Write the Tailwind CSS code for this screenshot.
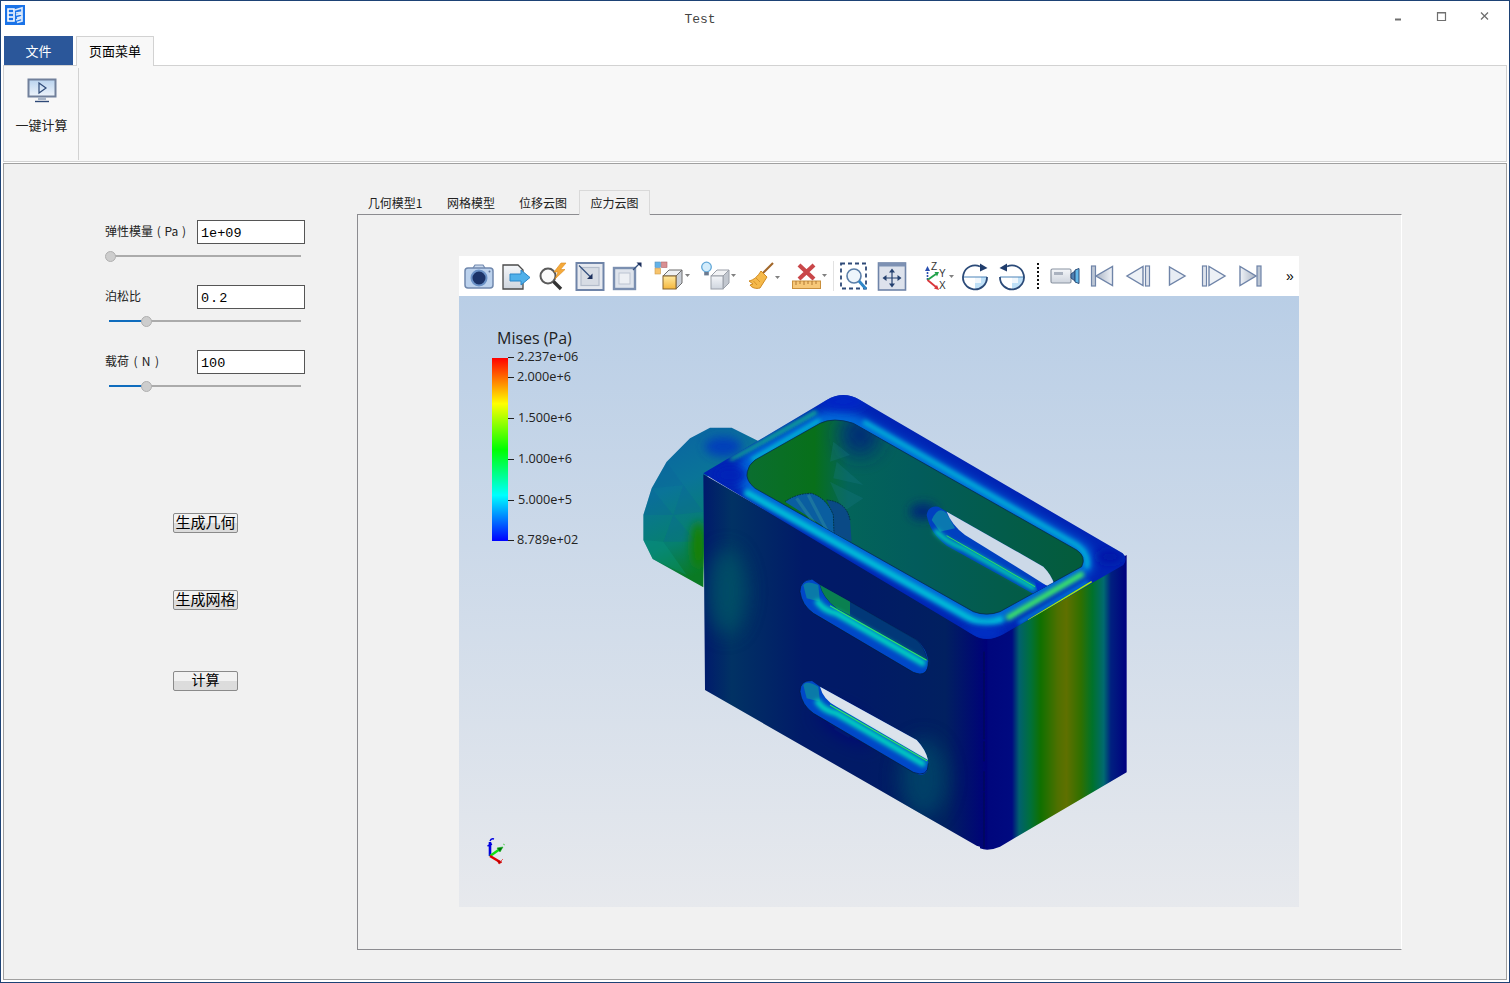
<!DOCTYPE html>
<html lang="en">
  <head>
    <meta charset="UTF-8" />
    <title>Test</title>
    <script src="https://cdn.jsdelivr.net/npm/@tailwindcss/browser@4"></script>
  </head>
  <body class="bg-white font-['Noto_Sans_CJK_SC','Liberation_Sans',sans-serif]">
    <!-- shared gradients -->
    <svg class="absolute w-0 h-0">
      <defs>
        <linearGradient id="gray" x1="0" y1="0" x2="0" y2="1"><stop offset="0" stop-color="#f4f6f9" /><stop offset="1" stop-color="#cfd5de" /></linearGradient>
        <linearGradient id="vcr" x1="0" y1="0" x2="1" y2="0"><stop offset="0" stop-color="#f0f3f8" /><stop offset="1" stop-color="#aab4c4" /></linearGradient>
        <linearGradient id="vcrr" x1="1" y1="0" x2="0" y2="0"><stop offset="0" stop-color="#f0f3f8" /><stop offset="1" stop-color="#aab4c4" /></linearGradient>
        <linearGradient id="yel" x1="0" y1="0" x2="0" y2="1"><stop offset="0" stop-color="#ffe9a0" /><stop offset="1" stop-color="#f5b63c" /></linearGradient>
        <linearGradient id="lcd" x1="0" y1="0" x2="0" y2="1"><stop offset="0" stop-color="#b9d3ee" /><stop offset="1" stop-color="#eef4fb" /></linearGradient>
      </defs>
    </svg>

    <div class="w-[1510px] h-[983px] border border-[#1d4275] bg-white overflow-hidden">
      <!-- Title bar -->
      <div class="h-[35px] relative flex items-center justify-center pr-[110px]">
        <svg class="absolute left-[4px] top-[4px]" width="20" height="20" viewBox="0 0 20 20">
          <rect width="20" height="20" fill="#1a73e8" />
          <path d="M3 4 H9 V16 H3 Z M3 8 H8 M3 12 H8" fill="none" stroke="#fff" stroke-width="1.6" />
          <path d="M10 5 L17 3 V7 L11 8 M11 10 L17 8.5 V11.5 L12 13 M11 15 L17 13 V16 L12 17.5" fill="none" stroke="#dbe9fb" stroke-width="1.7" />
        </svg>
        <span class="font-['Liberation_Mono',monospace] text-[13px] leading-none text-[#444] mt-[2px]">Test</span>
        <svg class="absolute left-[1393px] top-[10px]" width="100" height="14" viewBox="0 0 100 14" fill="none" stroke="#6f6f6f">
          <path d="M1 8.5 H7" stroke-width="2" />
          <path d="M43.5 1.5 H51.5 V9.5 H43.5 Z M43.5 2 H51.5" stroke-width="1.2" />
          <path d="M87 1.5 L94 8.5 M94 1.5 L87 8.5" stroke-width="1.3" />
        </svg>
      </div>

      <!-- Ribbon tabs -->
      <div class="h-[29px] pl-[3px] flex text-[13px] leading-none relative z-10">
        <div class="w-[69px] h-[29px] bg-[#2b579a] text-white flex items-center justify-center">文件</div>
        <div class="ml-[3px] w-[78px] h-[30px] pb-[2px] bg-[#f8f8f8] border border-b-0 border-[#d2d2d2] text-black flex items-center justify-center rounded-t-[1px]">页面菜单</div>
      </div>

      <!-- Ribbon -->
      <div class="ml-[2px] mr-[2px] h-[97px] bg-[#f8f8f8] border border-[#d2d2d2] flex">
        <div class="w-[75px] h-[92px] mt-[2px] border-r border-[#d2d2d2] flex flex-col items-center">
          <svg class="mt-[10px] ml-[1px]" width="30" height="26" viewBox="0 0 30 26">
            <rect x="1.5" y="1.5" width="27" height="17" fill="url(#lcd)" stroke="#71809b" stroke-width="2" />
            <path d="M12 5 L19 10 L12 15 Z" fill="none" stroke="#2e4a78" stroke-width="1.2" />
            <rect x="11" y="19" width="8" height="3" fill="#a9b6c8" />
            <path d="M8 23.5 H22" stroke="#2e4a78" stroke-width="1.4" />
          </svg>
          <span class="mt-[14px] ml-[1px] text-[13px] leading-none text-[#222]">一键计算</span>
        </div>
      </div>

      <!-- Main panel -->
      <div class="ml-[2px] mr-[2px] mt-[1px] h-[817px] bg-[#f1f1f1] border border-[#a0a0a0] flex">
        <!-- Parameters -->
        <div class="w-[353px] pt-[56px] pl-[101px]">
          <div class="flex items-center h-[24px] text-[12px] text-[#222]">
            <span class="w-[92px] whitespace-nowrap leading-none mt-[-2px] [word-spacing:1px]">弹性模量 ( Pa )</span>
            <input value="1e+09" class="w-[108px] h-[24px] bg-white border border-[#555] pl-[3px] pt-[2px] text-[13.5px] text-black font-['Liberation_Mono',monospace]" />
          </div>
          <div class="relative w-[192px] ml-[4px] h-[24px] flex items-center">
            <div class="w-full h-[2px] bg-[#ababab]"></div>
            <div class="absolute left-[-4px] top-[7px] w-[11px] h-[11px] rounded-full bg-[#cdcdcd] border border-[#b0b0b0]"></div>
          </div>

          <div class="mt-[17px] flex items-center h-[24px] text-[12px] text-[#222]">
            <span class="w-[92px] whitespace-nowrap leading-none mt-[-2px]">泊松比</span>
            <input value="0.2" class="w-[108px] h-[24px] bg-white border border-[#555] pl-[3px] pt-[2px] text-[13.5px] text-black font-['Liberation_Mono',monospace] tracking-[1px]" />
          </div>
          <div class="relative w-[192px] ml-[4px] h-[24px] flex items-center">
            <div class="w-[37px] h-[2px] bg-[#0f6cbd]"></div>
            <div class="flex-1 h-[2px] bg-[#ababab]"></div>
            <div class="absolute left-[32px] top-[7px] w-[11px] h-[11px] rounded-full bg-[#cdcdcd] border border-[#b0b0b0]"></div>
          </div>

          <div class="mt-[17px] flex items-center h-[24px] text-[12px] text-[#222]">
            <span class="w-[92px] whitespace-nowrap leading-none mt-[-2px] [word-spacing:1.7px]">载荷 ( N )</span>
            <input value="100" class="w-[108px] h-[24px] bg-white border border-[#555] pl-[3px] pt-[2px] text-[13.5px] text-black font-['Liberation_Mono',monospace]" />
          </div>
          <div class="relative w-[192px] ml-[4px] h-[24px] flex items-center">
            <div class="w-[37px] h-[2px] bg-[#0f6cbd]"></div>
            <div class="flex-1 h-[2px] bg-[#ababab]"></div>
            <div class="absolute left-[32px] top-[7px] w-[11px] h-[11px] rounded-full bg-[#cdcdcd] border border-[#b0b0b0]"></div>
          </div>

          <button class="block mt-[115px] ml-[68px] w-[65px] h-[20px] pb-[3px] rounded-[2px] border border-[#8a8a8a] bg-gradient-to-b from-[#f2f2f2] from-50% to-[#dcdcdc] to-50% text-[15px] leading-none text-black">生成几何</button>
          <button class="block mt-[57px] ml-[68px] w-[65px] h-[20px] pb-[3px] rounded-[2px] border border-[#8a8a8a] bg-gradient-to-b from-[#f2f2f2] from-50% to-[#dcdcdc] to-50% text-[15px] leading-none text-black">生成网格</button>
          <button class="block mt-[61px] ml-[68px] w-[65px] h-[20px] pb-[4px] rounded-[2px] border border-[#8a8a8a] bg-gradient-to-b from-[#f2f2f2] from-50% to-[#dcdcdc] to-50% text-[14px] leading-none text-black">计算</button>
        </div>

        <!-- Tabs and viewer -->
        <div class="w-[1045px] pt-[26px]">
          <div class="flex h-[25px] text-[12px] leading-none text-[#222] relative z-10">
            <div class="w-[76px] mr-[2px] h-[25px] flex items-center justify-center">几何模型1</div>
            <div class="w-[72px] h-[25px] flex items-center justify-center">网格模型</div>
            <div class="w-[72px] h-[25px] flex items-center justify-center">位移云图</div>
            <div class="w-[71px] h-[25px] flex items-center justify-center bg-[#f1f1f1] border border-b-0 border-[#d9d9d9]">应力云图</div>
          </div>
          <div class="h-[736px] mt-[-1px] border border-[#8c8c90] border-r-white pl-[101px] pt-[41px]">
            <div class="w-[840px] h-[651px] flex flex-col">
              <!-- Viewer toolbar -->
              <div class="h-[40px] bg-white flex items-center pl-[5px] shrink-0">
                <!-- screenshot -->
                <svg class="w-[30px] h-[30px] shrink-0 overflow-visible" viewBox="0 0 30 30">
                  <path d="M9 7 L11 4 H19 L21 7" fill="#c9d9ee" stroke="#7088ad" stroke-width="1.2" />
                  <rect x="1" y="7" width="28" height="20" rx="3" fill="#bcd2ed" stroke="#7088ad" stroke-width="1.5" />
                  <circle cx="15" cy="17" r="7.5" fill="#1c3469" stroke="#6b92c7" stroke-width="2" />
                  <circle cx="25.5" cy="10.5" r="1" fill="#5b7299" />
                </svg>
                <!-- export -->
                <svg class="ml-[7px] w-[30px] h-[30px] shrink-0 overflow-visible" viewBox="0 0 30 30">
                  <path d="M2 4 H17 L22 9 V28 H2 Z" fill="url(#gray)" stroke="#4a4a4a" stroke-width="1.3" />
                  <path d="M9 13 H20 V9 L29 16.5 L20 24 V20 H9 Z" fill="#4fb0ea" stroke="#2a86c8" stroke-width="1" />
                </svg>
                <!-- select -->
                <svg class="ml-[7px] w-[30px] h-[30px] shrink-0 overflow-visible" viewBox="0 0 30 30">
                  <circle cx="10" cy="15" r="7.5" fill="#fafafa" stroke="#5a5a5a" stroke-width="2" />
                  <path d="M15.5 20.5 L23 28" stroke="#333" stroke-width="3.4" />
                  <path d="M23 2 L16 11 H20 L17 18 L27 8.5 H22.5 L28 2 Z" fill="#f5a93a" stroke="#d98a1e" stroke-width=".6" />
                </svg>
                <!-- zoom to box -->
                <svg class="ml-[7px] w-[30px] h-[30px] shrink-0 overflow-visible" viewBox="0 0 30 30">
                  <rect x="1.5" y="2" width="27" height="27" fill="#e6e9ef" stroke="#6f84a8" stroke-width="2" />
                  <rect x="6" y="6.5" width="18" height="18" fill="#d7dce4" stroke="#b4bdcb" stroke-width="1.2" />
                  <path d="M4 4.5 L15 15.5" stroke="#34507f" stroke-width="1.3" />
                  <path d="M17.5 18 V12.5 L12 18 Z" fill="#1b2f5c" />
                </svg>
                <!-- expand -->
                <svg class="ml-[7px] w-[30px] h-[30px] shrink-0 overflow-visible" viewBox="0 0 30 30">
                  <rect x="2" y="7" width="21" height="21" fill="#dfe4ec" stroke="#7b8fb0" stroke-width="2.4" />
                  <rect x="7" y="12" width="11" height="11" fill="#edf0f4" stroke="#bcc4d1" stroke-width="1" />
                  <path d="M21 9 L27 3" stroke="#34507f" stroke-width="1.3" />
                  <path d="M24.5 1.5 H29.5 V6.5 Z" fill="#1b2f5c" />
                </svg>
                <!-- cube colour -->
                <svg class="ml-[14px] w-[30px] h-[30px] shrink-0 overflow-visible" viewBox="0 0 30 30">
                  <rect x="-1" y="1" width="5.5" height="5.5" fill="#63b2e8" stroke="#5a8fb8" stroke-width=".6" />
                  <rect x="5.5" y="1" width="5.5" height="5.5" fill="#d98f92" stroke="#b06468" stroke-width=".6" />
                  <rect x="-1" y="7.5" width="5.5" height="5.5" fill="#f7c36c" stroke="#cc9a48" stroke-width=".6" />
                  <path d="M7 15 L13 9 H26 L20 15 Z" fill="#eef0f3" stroke="#6c6c6c" stroke-width="1" />
                  <path d="M20 15 L26 9 V22 L20 28 Z" fill="#c9ced6" stroke="#6c6c6c" stroke-width="1" />
                  <rect x="7" y="15" width="13" height="13" fill="url(#yel)" stroke="#85622c" stroke-width="1" />
                  <path d="M29 13 H34 L31.5 16 Z" fill="#808080" />
                </svg>
                <!-- light -->
                <svg class="ml-[17px] w-[30px] h-[30px] shrink-0 overflow-visible" viewBox="0 0 30 30">
                  <circle cx="3.5" cy="6" r="4.8" fill="#d3ecfb" stroke="#63a8d8" stroke-width="1.3" />
                  <rect x="1.2" y="11" width="4.6" height="3.4" fill="#6a7a90" />
                  <path d="M8 15 L14 9 H26 L20 15 Z" fill="#f2f3f5" stroke="#9a9fa8" stroke-width="1" />
                  <path d="M20 15 L26 9 V22 L20 28 Z" fill="#c2c7cf" stroke="#9a9fa8" stroke-width="1" />
                  <rect x="8" y="15" width="12" height="13" fill="url(#gray)" stroke="#9a9fa8" stroke-width="1" />
                  <path d="M28 13 H33 L30.5 16 Z" fill="#808080" />
                </svg>
                <!-- clean -->
                <svg class="ml-[15px] w-[30px] h-[30px] shrink-0 overflow-visible" viewBox="0 0 30 30">
                  <path d="M25 2 L13 14" stroke="#a2672a" stroke-width="2.2" />
                  <path d="M13 10 L19 16 L12 27 C8 28 4 27 2 24 L5 23 L1 20 C6 19 10 15 13 10 Z" fill="#f5b94a" stroke="#cf8a22" stroke-width="1" />
                  <path d="M8 17 L12 21 M5.5 20 L9 24" stroke="#cf8a22" stroke-width=".8" />
                  <path d="M27 15 H32 L29.5 18 Z" fill="#808080" />
                </svg>
                <!-- remove -->
                <svg class="ml-[14px] w-[30px] h-[30px] shrink-0 overflow-visible" viewBox="0 0 30 30">
                  <path d="M7 4 L22 18 M22 4 L7 18" stroke="#c9474a" stroke-width="4.2" />
                  <rect x="0.5" y="20" width="28" height="7.5" fill="#f7c878" stroke="#c98f3c" stroke-width="1" />
                  <path d="M4 20 V24 M8 20 V23 M12 20 V24 M16 20 V23 M20 20 V24 M24 20 V23" stroke="#a8712a" stroke-width=".9" />
                  <path d="M30 13 H35 L32.5 16 Z" fill="#808080" />
                </svg>
                <div class="ml-[11px] w-[1px] h-[30px] bg-[#e2e2e2] shrink-0"></div>
                <!-- zoom box -->
                <svg class="ml-[5px] w-[30px] h-[30px] shrink-0 overflow-visible" viewBox="0 0 30 30">
                  <rect x="2" y="2.5" width="25" height="25" fill="none" stroke="#2f4a78" stroke-width="1.8" stroke-dasharray="4 3" />
                  <circle cx="15" cy="15" r="7" fill="#eef5fb" stroke="#5a7ea8" stroke-width="1.6" />
                  <path d="M20 20 L27 28" stroke="#2f86c8" stroke-width="3" />
                </svg>
                <!-- reset pan -->
                <svg class="ml-[8px] w-[30px] h-[30px] shrink-0 overflow-visible" viewBox="0 0 30 30">
                  <rect x="1.5" y="2" width="27" height="27" fill="#dde2ec" stroke="#6f84a8" stroke-width="1.6" />
                  <rect x="1.5" y="2" width="27" height="3.5" fill="#7d91b3" />
                  <path d="M15 9 V25 M7 17 H23" stroke="#24406f" stroke-width="1.2" />
                  <path d="M15 7.5 L18 11.5 H12 Z M15 26.5 L18 22.5 H12 Z M5.5 17 L9.5 14 V20 Z M24.5 17 L20.5 14 V20 Z" fill="#24406f" />
                </svg>
                <!-- axes -->
                <svg class="ml-[16px] w-[30px] h-[30px] shrink-0 overflow-visible" viewBox="0 0 30 30">
                  <path d="M4.5 19 V8" stroke="#2a4fb0" stroke-width="1.6" stroke-dasharray="2 1" />
                  <path d="M4.5 19 L13 13" stroke="#22a14a" stroke-width="1.8" />
                  <path d="M4.5 19 L13 26" stroke="#d9363a" stroke-width="1.8" />
                  <path d="M4.5 5 L7 10 H2 Z" fill="#2a4fb0" />
                  <path d="M16 11 L11.5 11 L14 15.5 Z" fill="#22a14a" />
                  <path d="M16 29 L11 27.5 L14 24 Z" fill="#d9363a" />
                  <text x="8" y="8.5" font-size="10" font-family="Liberation Sans" fill="#333">Z</text>
                  <text x="16" y="15.5" font-size="10" font-family="Liberation Sans" fill="#333">Y</text>
                  <text x="16" y="28" font-size="10" font-family="Liberation Sans" fill="#333">X</text>
                  <path d="M26 14 H31 L28.5 17 Z" fill="#808080" />
                </svg>
                <!-- rotate cw -->
                <svg class="ml-[7px] w-[30px] h-[30px] shrink-0 overflow-visible" viewBox="0 0 30 30">
                  <path d="M15 16 H27 A12 12 0 0 1 15 28 Z" fill="#bfe0f7" />
                  <path d="M15 16 H21 V22 H15 Z" fill="#f0f7fd" />
                  <path d="M3 16 H27" stroke="#4a83b8" stroke-width="1" />
                  <path d="M27 16 A12 12 0 1 1 20 5.5" fill="none" stroke="#2b4a78" stroke-width="1.8" />
                  <path d="M20 2.5 L27.5 7 L20 10.5 Z" fill="#1f3c6c" />
                </svg>
                <!-- rotate ccw -->
                <svg class="ml-[7px] w-[30px] h-[30px] shrink-0 overflow-visible" viewBox="0 0 30 30">
                  <path d="M15 16 H27 A12 12 0 0 1 15 28 Z" fill="#bfe0f7" />
                  <path d="M15 16 H21 V22 H15 Z" fill="#f0f7fd" />
                  <path d="M3 16 H27" stroke="#4a83b8" stroke-width="1" />
                  <path d="M3 16 A12 12 0 1 0 10 5.5" fill="none" stroke="#2b4a78" stroke-width="1.8" />
                  <path d="M10 2.5 L2.5 7 L10 10.5 Z" fill="#1f3c6c" />
                </svg>
                <div class="ml-[10px] w-[2px] h-[26px] shrink-0 bg-[repeating-linear-gradient(to_bottom,#111_0,#111_2px,transparent_2px,transparent_4px)]"></div>
                <!-- record -->
                <svg class="ml-[11px] w-[30px] h-[30px] shrink-0 overflow-visible" viewBox="0 0 30 30">
                  <rect x="1" y="8" width="20" height="14" rx="1.5" fill="url(#gray)" stroke="#8a93a1" stroke-width="1.2" />
                  <rect x="4" y="11" width="9" height="3" fill="#aab2bf" />
                  <path d="M21 13 L25 10 V20 L21 17 Z" fill="#4f7fb0" stroke="#2c4d78" stroke-width="1" />
                  <path d="M25 9 L29 7.5 V22.5 L25 21 Z" fill="#63b8e8" stroke="#2c4d78" stroke-width="1" />
                </svg>
                <!-- first frame -->
                <svg class="ml-[7px] w-[30px] h-[30px] shrink-0 overflow-visible" viewBox="0 0 30 30">
                  <rect x="4.5" y="5" width="4" height="20" fill="#bcc6d4" stroke="#6f84a8" stroke-width="1.2" />
                  <path d="M25.5 5.5 V24.5 L9 15 Z" fill="url(#vcrr)" stroke="#6f84a8" stroke-width="1.4" />
                </svg>
                <!-- prev -->
                <svg class="ml-[7px] w-[30px] h-[30px] shrink-0 overflow-visible" viewBox="0 0 30 30">
                  <path d="M19 5.5 V24.5 L3 15 Z" fill="#edf1f6" stroke="#6f84a8" stroke-width="1.4" />
                  <rect x="21.5" y="5" width="4" height="20" fill="#dfe4ec" stroke="#6f84a8" stroke-width="1.2" />
                </svg>
                <!-- play -->
                <svg class="ml-[8px] w-[30px] h-[30px] shrink-0 overflow-visible" viewBox="0 0 30 30">
                  <path d="M7.5 6 V24 L23 15 Z" fill="#e8edf4" stroke="#6f84a8" stroke-width="1.4" />
                </svg>
                <!-- next -->
                <svg class="ml-[6px] w-[30px] h-[30px] shrink-0 overflow-visible" viewBox="0 0 30 30">
                  <rect x="4.5" y="5" width="4" height="20" fill="#dfe4ec" stroke="#6f84a8" stroke-width="1.2" />
                  <path d="M11 5.5 V24.5 L27 15 Z" fill="#edf1f6" stroke="#6f84a8" stroke-width="1.4" />
                </svg>
                <!-- last frame -->
                <svg class="ml-[7px] w-[30px] h-[30px] shrink-0 overflow-visible" viewBox="0 0 30 30">
                  <path d="M5 5.5 V24.5 L21 15 Z" fill="url(#vcr)" stroke="#6f84a8" stroke-width="1.4" />
                  <rect x="22" y="5" width="4" height="20" fill="#bcc6d4" stroke="#6f84a8" stroke-width="1.2" />
                </svg>
                <span class="ml-[21px] text-[14px] leading-none text-black font-['Liberation_Sans',sans-serif]">»</span>
              </div>

              <!-- Render area -->
              <div class="relative flex-1 bg-gradient-to-b from-[#b9cee6] to-[#e7e9ed] overflow-hidden font-['Open_Sans',sans-serif] text-[#222]">
                <!-- colour legend -->
                <div class="absolute left-[38px] top-[34px] text-[16px] leading-none whitespace-nowrap">Mises (Pa)</div>
                <div class="absolute left-[33px] top-[62px] w-[16px] h-[183px] bg-[linear-gradient(to_bottom,#ff0000_0%,#ffff00_25%,#00ff00_50%,#00ffff_75%,#0000ff_100%)]"></div>
                <div class="absolute left-[49px] top-[61px] w-[6px] h-[1px] bg-[#222]"></div>
                <div class="absolute left-[49px] top-[81px] w-[6px] h-[1px] bg-[#222]"></div>
                <div class="absolute left-[49px] top-[122px] w-[6px] h-[1px] bg-[#222]"></div>
                <div class="absolute left-[49px] top-[163px] w-[6px] h-[1px] bg-[#222]"></div>
                <div class="absolute left-[49px] top-[204px] w-[6px] h-[1px] bg-[#222]"></div>
                <div class="absolute left-[49px] top-[244px] w-[6px] h-[1px] bg-[#222]"></div>
                <div class="absolute left-[58px] top-[54px] text-[12.7px] leading-none whitespace-nowrap">2.237e+06</div>
                <div class="absolute left-[58px] top-[74px] text-[12.7px] leading-none whitespace-nowrap">2.000e+6</div>
                <div class="absolute left-[59px] top-[115px] text-[12.7px] leading-none whitespace-nowrap">1.500e+6</div>
                <div class="absolute left-[59px] top-[156px] text-[12.7px] leading-none whitespace-nowrap">1.000e+6</div>
                <div class="absolute left-[59px] top-[197px] text-[12.7px] leading-none whitespace-nowrap">5.000e+5</div>
                <div class="absolute left-[58px] top-[237px] text-[12.7px] leading-none whitespace-nowrap">8.789e+02</div>

                <!-- orientation triad -->
                <svg class="absolute left-[27px] top-[540px]" width="24" height="30" viewBox="0 0 24 30">
                  <path d="M4 20 V6" stroke="#0000e0" stroke-width="2.6" />
                  <path d="M4 5 Q5 2 8 3 M1.5 10 L6 8" stroke="#0000e0" stroke-width="1.4" fill="none" />
                  <path d="M4 20 L14 13" stroke="#10e010" stroke-width="2.4" />
                  <path d="M11 12 L17 11 L14 16 Z M17 8 L19 9" fill="#007010" stroke="#10c010" stroke-width=".6" />
                  <path d="M4 20 L14 26" stroke="#e00000" stroke-width="2.6" />
                  <path d="M11 24 L16 26 L13 28 Z M17 23 L15 25" fill="#b00000" stroke="#e00000" stroke-width=".6" />
                </svg>

                <!-- stress result model, drawn in its own 3x coordinate space -->
                <svg class="absolute left-[171px] top-[89px]" width="510" height="475" viewBox="0 0 1530 1425">
                  <defs>
                    <filter id="b4" filterUnits="userSpaceOnUse" x="0" y="0" width="1530" height="1425"><feGaussianBlur stdDeviation="7" /></filter>
                    <filter id="b10" filterUnits="userSpaceOnUse" x="0" y="0" width="1530" height="1425"><feGaussianBlur stdDeviation="14" /></filter>
                    <filter id="b30" filterUnits="userSpaceOnUse" x="0" y="0" width="1530" height="1425"><feGaussianBlur stdDeviation="30" /></filter>
                    <linearGradient id="boss" gradientUnits="userSpaceOnUse" x1="40" y1="150" x2="220" y2="560">
                      <stop offset="0" stop-color="#0a62a4" /><stop offset=".4" stop-color="#0a7498" /><stop offset=".75" stop-color="#06806e" /><stop offset="1" stop-color="#0a7a24" />
                    </linearGradient>
                    <linearGradient id="front" gradientUnits="userSpaceOnUse" x1="220" y1="0" x2="1075" y2="0">
                      <stop offset="0" stop-color="#001a6c" /><stop offset=".1" stop-color="#013264" /><stop offset=".35" stop-color="#011a68" /><stop offset=".55" stop-color="#011a66" /><stop offset=".85" stop-color="#012060" /><stop offset="1" stop-color="#00007a" />
                    </linearGradient>
                    <linearGradient id="right" gradientUnits="userSpaceOnUse" x1="1060" y1="0" x2="1490" y2="0">
                      <stop offset="0" stop-color="#00067c" /><stop offset=".2" stop-color="#000a80" /><stop offset=".25" stop-color="#00606e" /><stop offset=".33" stop-color="#00703a" /><stop offset=".4" stop-color="#107000" /><stop offset=".52" stop-color="#4f7000" /><stop offset=".58" stop-color="#5f7000" /><stop offset=".68" stop-color="#307000" /><stop offset=".76" stop-color="#00722a" /><stop offset=".84" stop-color="#006a70" /><stop offset=".89" stop-color="#002080" /><stop offset="1" stop-color="#00007f" />
                    </linearGradient>
                    <linearGradient id="wall" gradientUnits="userSpaceOnUse" x1="352" y1="0" x2="1360" y2="0">
                      <stop offset="0" stop-color="#0a6e30" /><stop offset=".2" stop-color="#08701a" /><stop offset=".3" stop-color="#03645a" /><stop offset=".5" stop-color="#025c5c" /><stop offset="1" stop-color="#045c3a" />
                    </linearGradient>
                    <clipPath id="rimClip"><path d="M220 265 L590 45 Q640 15 690 45 L1478 505 Q1495 520 1480 540 L1120 748 Q1070 775 1030 750 Z" /></clipPath>
                    <clipPath id="frontClip"><path d="M220 268 L1040 740 L1072 750 L1072 1392 L1040 1382 L225 915 Z" /></clipPath>
                    <clipPath id="wallClip"><path d="M375 225 L570 115 Q610 95 670 115 L1340 495 Q1370 515 1355 545 L1110 680 Q1070 695 1030 680 L375 310 Q345 285 352 260 Q355 240 375 225 Z" /></clipPath>
                  </defs>

                  <!-- boss behind the box -->
                  <path d="M240 128 L305 128 L385 168 L225 280 L220 607 L68 522 L40 465 L40 390 L65 310 L110 230 L180 160 Z" fill="url(#boss)" />
                  <ellipse cx="280" cy="185" rx="55" ry="30" fill="#0038c0" filter="url(#b10)" opacity=".85" />
                  <path d="M110 230 L160 300 L65 310 Z M65 310 L130 390 L40 390 Z M130 390 L200 470 L100 470 Z M160 300 L220 380 L130 390 Z" fill="#0a5e9a" opacity=".25" />
                  <path d="M40 465 L100 470 L68 522 Z M100 470 L170 570 L68 522 Z" fill="#0a9a80" opacity=".3" />
                  <ellipse cx="205" cy="480" rx="22" ry="70" fill="#188000" filter="url(#b10)" />

                  <!-- right face -->
                  <path d="M1045 750 L1120 720 L1490 510 L1490 1162 L1110 1385 Q1075 1400 1050 1390 Z" fill="url(#right)" />

                  <!-- front face -->
                  <path d="M220 268 L1040 740 L1072 750 L1072 1392 L1040 1382 L225 915 Z" fill="url(#front)" />
                  <g clip-path="url(#frontClip)">
                    <ellipse cx="290" cy="620" rx="60" ry="130" fill="#045a68" filter="url(#b30)" opacity=".7" />
                    <ellipse cx="880" cy="1180" rx="70" ry="120" fill="#03506a" filter="url(#b30)" opacity=".7" />
                    <ellipse cx="650" cy="1020" rx="90" ry="30" fill="#00107a" filter="url(#b30)" transform="rotate(30 650 1020)" />
                  </g>
                  <path d="M1062 800 V1390" stroke="#00103a" stroke-width="2" stroke-dasharray="60 3 200 6 60 30" fill="none" />

                  <!-- top rim -->
                  <path d="M220 265 L590 45 Q640 15 690 45 L1478 505 Q1495 520 1480 540 L1120 748 Q1070 775 1030 750 Z" fill="#0024b4" />
                  <g clip-path="url(#rimClip)">
                    <path d="M375 225 L570 115 Q610 95 670 115 L1340 495 Q1370 515 1355 545 L1110 680 Q1070 695 1030 680 L375 310 Q345 285 352 260 Q355 240 375 225 Z" fill="none" stroke="#0068d8" stroke-width="60" filter="url(#b10)" />
                    <path d="M345 320 L1010 695 Q1060 725 1120 700" fill="none" stroke="#00c0d8" stroke-width="20" filter="url(#b4)" />
                    <path d="M300 225 L560 80" fill="none" stroke="#18d880" stroke-width="9" filter="url(#b4)" />
                    <path d="M365 225 L570 105" fill="none" stroke="#00c8d0" stroke-width="11" filter="url(#b4)" />
                    <path d="M700 110 L1340 480 Q1380 510 1370 550" fill="none" stroke="#00b0d8" stroke-width="15" filter="url(#b4)" />
                    <path d="M1130 700 L1360 565" fill="none" stroke="#40f060" stroke-width="16" filter="url(#b4)" />
                    <path d="M1165 715 L1375 590" fill="none" stroke="#0098e0" stroke-width="10" filter="url(#b4)" />
                    <path d="M1195 705 L1385 590" fill="none" stroke="#b0f000" stroke-width="4" />
                    <ellipse cx="640" cy="50" rx="70" ry="25" fill="#0028c8" filter="url(#b10)" />
                    <ellipse cx="300" cy="270" rx="50" ry="30" fill="#0022b8" filter="url(#b10)" />
                    <ellipse cx="1440" cy="515" rx="40" ry="20" fill="#0018a8" filter="url(#b10)" />
                    <ellipse cx="1060" cy="745" rx="60" ry="18" fill="#0030c8" filter="url(#b10)" />
                  </g>

                  <!-- opening, inner wall -->
                  <path d="M375 225 L570 115 Q610 95 670 115 L1340 495 Q1370 515 1355 545 L1110 680 Q1070 695 1030 680 L375 310 Q345 285 352 260 Q355 240 375 225 Z" fill="url(#wall)" stroke="#04204a" stroke-width="2" />
                  <g clip-path="url(#wallClip)">
                    <ellipse cx="690" cy="150" rx="55" ry="60" fill="#012a78" filter="url(#b30)" />
                    <path d="M610 170 L660 210 L600 230 Z M620 230 L700 300 L610 280 Z M600 290 L700 340 L640 380 Z" fill="#1a7a90" opacity=".25" />
                    <!-- round hole -->
                    <path d="M465 350 Q500 325 545 325 Q590 340 610 390 L612 445 Z" fill="#0a5ea0" />
                    <path d="M500 340 L560 425 M535 330 L590 435" stroke="#2a8aa0" stroke-width="10" opacity=".5" />
                    <path d="M590 345 Q650 350 660 405 L665 470 L612 445 L610 390 Z" fill="#0a4a86" />
                    <path d="M465 350 Q500 325 545 325 Q590 340 610 390 L612 445 M590 345 Q650 350 660 405" fill="none" stroke="#02203a" stroke-width="2" stroke-dasharray="5 3" />
                    <ellipse cx="880" cy="380" rx="40" ry="25" fill="#012a78" filter="url(#b10)" />
                    <!-- far slot -->
                    <path d="M890 390 Q895 360 925 365 L950 380 L1240 545 Q1270 580 1275 600 L1220 632 L950 482 Q900 445 890 390 Z" fill="#0040c0" />
                    <path d="M905 405 Q925 360 950 385 L975 430 L930 440 Z" fill="#0a78b0" />
                    <path d="M950 380 L1240 545 Q1265 570 1272 597 L1255 605 L1005 450 Q965 420 950 380 Z" fill="#ccd9e8" />
                    <path d="M915 435 Q945 470 1000 490 L1215 612" fill="none" stroke="#00d8b0" stroke-width="14" filter="url(#b4)" />
                    <path d="M950 452 L1215 605" fill="none" stroke="#30e060" stroke-width="3" />
                    <path d="M1215 590 L1262 605 L1225 628 Z" fill="#0030d0" />
                  </g>

                  <!-- front slots -->
                  <path d="M510 620 Q510 585 545 583 L570 600 L860 765 Q890 790 895 830 Q895 865 870 868 L850 862 L550 685 Q515 660 510 620 Z" fill="#0048c8" />
                  <path d="M570 600 L660 650 L860 765 Q885 790 892 825 L620 670 Q580 640 570 600 Z" fill="#013878" stroke="#012040" stroke-width="1.5" />
                  <path d="M570 600 L660 650 V690 L620 670 Q580 640 570 600 Z" fill="#0a8050" />
                  <path d="M520 600 Q530 585 565 600 L570 650 L530 640 Z" fill="#0a7aa8" />
                  <path d="M560 645 Q575 675 620 685 L885 838" fill="none" stroke="#00d8c0" stroke-width="18" filter="url(#b4)" />
                  <path d="M600 662 L890 826" fill="none" stroke="#30e860" stroke-width="3.5" />
                  <path d="M510 620 Q510 585 545 583 M510 620 Q515 660 550 685 L850 862 Q895 880 895 830" fill="none" stroke="#021a3a" stroke-width="2" />

                  <path d="M510 920 Q510 885 545 887 L570 905 L860 1065 Q890 1095 895 1135 Q895 1172 870 1170 L850 1162 L550 985 Q515 960 510 920 Z" fill="#0048c8" />
                  <path d="M570 905 L860 1065 Q888 1095 894 1125 L620 965 Q580 945 570 905 Z" fill="#dbe3ec" />
                  <path d="M520 900 Q530 885 565 905 L570 950 L530 940 Z" fill="#0a7aa8" />
                  <path d="M560 945 Q575 975 620 985 L885 1140" fill="none" stroke="#00d8c0" stroke-width="18" filter="url(#b4)" />
                  <path d="M600 960 L892 1128" fill="none" stroke="#30e860" stroke-width="3.5" />
                  <path d="M510 920 Q510 885 545 887 M510 920 Q515 960 550 985 L850 1162 Q895 1180 895 1135" fill="none" stroke="#021a3a" stroke-width="2" />
                </svg>
              </div>
            </div>
          </div>
        </div>
      </div>
    </div>
  </body>
</html>
